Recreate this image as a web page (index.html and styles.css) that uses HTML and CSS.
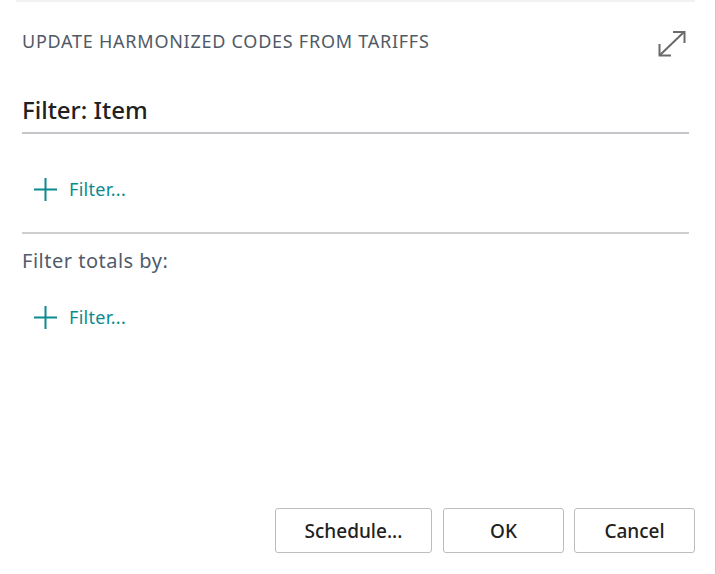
FILE: index.html
```html
<!DOCTYPE html>
<html>
<head>
<meta charset="utf-8">
<link rel="stylesheet" href="styles.css">
</head>
<body>
<div class="dialog">
  <div class="topstrip"></div>
  <div class="header">
    <div class="title">UPDATE HARMONIZED CODES FROM TARIFFS</div>
    <svg class="expand" width="32" height="30" viewBox="0 0 32 30">
      <path d="M4 26 L28 3" stroke="#6a6a6a" stroke-width="2" fill="none"/>
      <path d="M17 3 H28.5 V14" stroke="#6a6a6a" stroke-width="2" fill="none"/>
      <path d="M3.5 15 V26.5 H15" stroke="#6a6a6a" stroke-width="2" fill="none"/>
    </svg>
  </div>
  <div class="section">
    <h2 class="section-title">Filter: Item</h2>
    <div class="filter-row">
      <svg class="plus" width="23" height="23" viewBox="0 0 23 23">
        <path d="M11.5 0 V23 M0 11.5 H23" stroke="#0b8a8f" stroke-width="2"/>
      </svg>
      <span class="filter-link">Filter...</span>
    </div>
  </div>
  <div class="section2">
    <div class="totals">Filter totals by:</div>
    <div class="filter-row second">
      <svg class="plus" width="23" height="23" viewBox="0 0 23 23">
        <path d="M11.5 0 V23 M0 11.5 H23" stroke="#0b8a8f" stroke-width="2"/>
      </svg>
      <span class="filter-link">Filter...</span>
    </div>
  </div>
  <div class="spacer"></div>
  <div class="buttons">
    <button class="btn btn-schedule">Schedule...</button>
    <button class="btn">OK</button>
    <button class="btn">Cancel</button>
  </div>
</div>
</body>
</html>
```
FILE: styles.css
```css
html, body {
  margin: 0;
  padding: 0;
  background: #ffffff;
}
.dialog {
  width: 715px;
  height: 574px;
  border-right: 1px solid #c9c9c9;
  display: flex;
  flex-direction: column;
  font-family: "Noto Sans", "Open Sans", sans-serif;
}
.topstrip {
  height: 2px;
  margin: 0 20px 0 16px;
  background: #f2f2f2;
}
.header {
  display: flex;
  justify-content: space-between;
  align-items: flex-start;
  padding: 0 27px 0 22px;
}
.title {
  margin-top: 27px;
  font-size: 18px;
  letter-spacing: 0.75px;
  color: #505a66;
  line-height: 24px;
}
.expand {
  margin-top: 27px;
}
.section {
  margin: 0 26px 0 22px;
  border-bottom: 2px solid #cfcfcf;
  padding-bottom: 31px;
}
.section-title {
  margin: 35px 0 0 0;
  font-size: 24px;
  font-weight: 500;
  color: #212121;
  line-height: 32px;
  padding-bottom: 6px;
  border-bottom: 2px solid #c4c6ca;
}
.filter-row {
  display: flex;
  align-items: center;
  margin-top: 43px;
  padding-left: 12px;
}
.plus {
  margin-right: 12px;
}
.filter-link {
  font-size: 18px;
  letter-spacing: 0.3px;
  color: #0b8a8f;
}
.section2 {
  margin: 0 26px 0 22px;
}
.totals {
  margin-top: 13px;
  font-size: 20px;
  letter-spacing: 0.5px;
  color: #505c6d;
  line-height: 28px;
}
.filter-row.second {
  margin-top: 30px;
}
.spacer {
  flex: 1;
}
.buttons {
  display: flex;
  justify-content: flex-end;
  gap: 10px;
  padding: 0 20px 21px 0;
}
.btn {
  width: 121px;
  height: 45px;
  border: 1px solid #bdbdbd;
  border-radius: 3px;
  background: #ffffff;
  font-family: "Noto Sans", "Open Sans", sans-serif;
  font-size: 19px;
  font-weight: 500;
  color: #212121;
}
.btn-schedule {
  width: 157px;
  margin-right: 1px;
}
```
